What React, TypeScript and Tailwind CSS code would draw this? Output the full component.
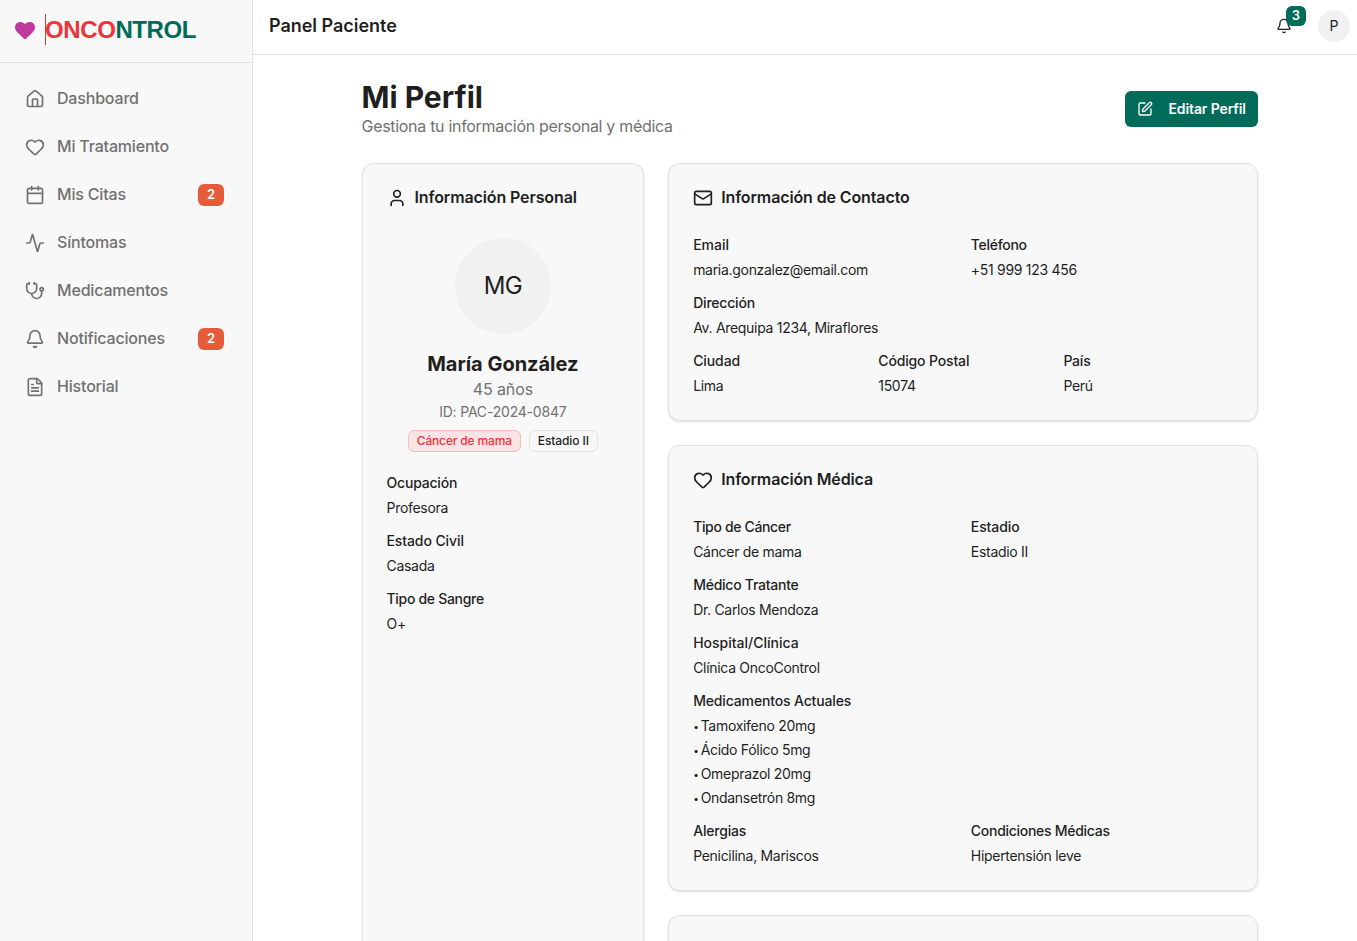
import type { ReactNode } from "react";
import {
  Activity,
  Bell,
  Calendar,
  FileText,
  Heart,
  House,
  Mail,
  SquarePen,
  Stethoscope,
  User,
  type LucideIcon,
} from "lucide-react";

type NavItem = { label: string; icon: LucideIcon; badge?: number };

const navItems: NavItem[] = [
  { label: "Dashboard", icon: House },
  { label: "Mi Tratamiento", icon: Heart },
  { label: "Mis Citas", icon: Calendar, badge: 2 },
  { label: "Síntomas", icon: Activity },
  { label: "Medicamentos", icon: Stethoscope },
  { label: "Notificaciones", icon: Bell, badge: 2 },
  { label: "Historial", icon: FileText },
];

function Sidebar() {
  return (
    <aside className="flex w-[253px] shrink-0 flex-col border-r border-[#e2e2e2] bg-[#f8f8f8]">
      <div className="flex h-[63px] shrink-0 items-center gap-2 border-b border-[#e2e2e2] pb-[3px] pl-[13px]">
        <Heart className="size-6 fill-[#c0399f] text-[#c0399f]" strokeWidth={0} />
        <div className="flex h-[31px] items-center border-l border-[#d93a3f] font-['Liberation_Sans',Arial,sans-serif] text-2xl font-bold tracking-[-0.4px]">
          <span className="-ml-px text-[#ef333b]">ONCO</span>
          <span className="text-[#006b58]">NTROL</span>
        </div>
      </div>
      <nav className="flex flex-col gap-2 pt-4 pr-4 pl-[13px]">
        {navItems.map(({ label, icon: Icon, badge }) => (
          <a key={label} className="flex h-10 items-center gap-3 px-3 text-[#717171]">
            <Icon className="size-5 shrink-0" strokeWidth={2} />
            <span className="flex-1 pb-0.5 text-base font-medium tracking-[-0.18px]">{label}</span>
            {badge && (
              <span className="flex h-[22px] w-[26px] items-center justify-center rounded-md bg-[#e65c3a] text-[13px] font-semibold text-white">
                {badge}
              </span>
            )}
          </a>
        ))}
      </nav>
    </aside>
  );
}

function TopBar() {
  return (
    <header className="flex h-[55px] shrink-0 items-center justify-between border-b border-[#e2e2e2] pr-[7px] pb-[2px] pl-4">
      <h2 className="text-lg font-semibold tracking-[-0.02px]">Panel Paciente</h2>
      <div className="flex items-center gap-[26px]">
        <div className="relative">
          <Bell className="size-4" strokeWidth={2} />
          <span className="absolute -top-3 left-2.5 flex size-5 items-center justify-center rounded-md bg-[#006b58] text-[13px] font-semibold text-white">
            3
          </span>
        </div>
        <div className="flex size-8 items-center justify-center rounded-full bg-[#f1f1f1] text-sm">P</div>
      </div>
    </header>
  );
}

function Card({ title, icon: Icon, children }: { title: string; icon: LucideIcon; children: ReactNode }) {
  return (
    <section className="rounded-xl border border-[#e2e2e2] bg-[#f8f8f8] p-6 shadow-sm">
      <h3 className="mb-[30px] flex h-5 items-center gap-2 text-base font-semibold tracking-[-0.12px]">
        <Icon className="size-5" strokeWidth={2} />
        <span className="pb-0.5">{title}</span>
      </h3>
      {children}
    </section>
  );
}

type FieldProps = { label: string; values: string[]; bulleted?: boolean; labelTracking?: string };

function Field({ label, values, bulleted, labelTracking = "tracking-[-0.2px]" }: FieldProps) {
  return (
    <div>
      <div className={`mb-2 text-sm leading-none font-medium ${labelTracking}`}>{label}</div>
      <div className="flex flex-col gap-1">
        {values.map((value) => (
          <p key={value} className="flex text-sm tracking-[-0.3px]">
            {bulleted && <span className="w-[7.5px] shrink-0 text-[10px] leading-5">•</span>}
            {value}
          </p>
        ))}
      </div>
    </div>
  );
}

function PersonalCard() {
  return (
    <Card title="Información Personal" icon={User}>
      <div className="mb-6 flex flex-col items-center">
        <div className="mb-4 flex size-24 items-center justify-center rounded-full bg-[#f1f1f1] text-2xl tracking-[-0.8px]">
          MG
        </div>
        <h4 className="text-xl font-bold tracking-[-0.02px]">María González</h4>
        <p className="-mt-px mb-px text-base tracking-[-0.1px] text-[#717171]">45 años</p>
        <p className="text-sm tracking-[-0.2px] text-[#717171]">ID: PAC-2024-0847</p>
        <div className="mt-2 flex gap-2">
          <span className="flex h-[22px] w-[113px] items-center justify-center rounded-md border border-[#f8bcbe] bg-[#f7e4e4] text-xs font-medium tracking-[-0.15px] text-[#ef333b]">
            Cáncer de mama
          </span>
          <span className="flex h-[22px] w-[69px] items-center justify-center rounded-md border border-[#e2e2e2] text-xs font-medium tracking-[-0.1px]">
            Estadio II
          </span>
        </div>
      </div>
      <div className="flex flex-col gap-4">
        <Field label="Ocupación" values={["Profesora"]} />
        <Field label="Estado Civil" values={["Casada"]} labelTracking="tracking-[-0.1px]" />
        <Field label="Tipo de Sangre" values={["O+"]} labelTracking="tracking-[-0.3px]" />
      </div>
    </Card>
  );
}

function ContactCard() {
  return (
    <Card title="Información de Contacto" icon={Mail}>
      <div className="flex flex-col gap-4">
        <div className="grid grid-cols-2 gap-4">
          <Field label="Email" values={["maria.gonzalez@email.com"]} labelTracking="tracking-normal" />
          <Field label="Teléfono" values={["+51 999 123 456"]} labelTracking="tracking-[-0.3px]" />
        </div>
        <Field label="Dirección" values={["Av. Arequipa 1234, Miraflores"]} />
        <div className="grid grid-cols-3 gap-4">
          <Field label="Ciudad" values={["Lima"]} labelTracking="tracking-[-0.1px]" />
          <Field label="Código Postal" values={["15074"]} labelTracking="tracking-[-0.15px]" />
          <Field label="País" values={["Perú"]} />
        </div>
      </div>
    </Card>
  );
}

function MedicalCard() {
  return (
    <Card title="Información Médica" icon={Heart}>
      <div className="flex flex-col gap-4">
        <div className="grid grid-cols-2 gap-4">
          <Field label="Tipo de Cáncer" values={["Cáncer de mama"]} labelTracking="tracking-[-0.35px]" />
          <Field label="Estadio" values={["Estadio II"]} labelTracking="tracking-[-0.1px]" />
        </div>
        <Field label="Médico Tratante" values={["Dr. Carlos Mendoza"]} labelTracking="tracking-[-0.25px]" />
        <Field label="Hospital/Clínica" values={["Clínica OncoControl"]} labelTracking="tracking-normal" />
        <Field
          label="Medicamentos Actuales"
          values={["Tamoxifeno 20mg", "Ácido Fólico 5mg", "Omeprazol 20mg", "Ondansetrón 8mg"]}
          bulleted
          labelTracking="tracking-[-0.15px]"
        />
        <div className="grid grid-cols-2 gap-4">
          <Field label="Alergias" values={["Penicilina, Mariscos"]} />
          <Field label="Condiciones Médicas" values={["Hipertensión leve"]} labelTracking="tracking-[-0.28px]" />
        </div>
      </div>
    </Card>
  );
}

export default function App() {
  return (
    <div className="flex h-screen overflow-hidden bg-white font-[Inter,sans-serif] text-[#1f1f1f]">
      <Sidebar />
      <div className="flex min-w-0 flex-1 flex-col">
        <TopBar />
        <main className="flex-1 overflow-hidden pt-6 pl-[9px]">
          <div className="mx-auto flex max-w-4xl flex-col gap-6">
            <div className="flex items-center justify-between">
              <div>
                <h1 className="text-3xl font-bold">Mi Perfil</h1>
                <p className="-mt-px mb-px text-base tracking-[-0.3px] text-[#717171]">
                  Gestiona tu información personal y médica
                </p>
              </div>
              <button className="flex h-9 w-[133px] items-center gap-4 rounded-md bg-[#006b58] px-3 text-sm font-semibold tracking-[-0.12px] whitespace-nowrap text-white">
                <SquarePen className="size-4 shrink-0" strokeWidth={2} />
                Editar Perfil
              </button>
            </div>
            <div className="grid grid-cols-3 gap-6">
              <PersonalCard />
              <div className="col-span-2 flex flex-col gap-6">
                <ContactCard />
                <MedicalCard />
                <section className="h-64 rounded-xl border border-[#e2e2e2] bg-[#f8f8f8] shadow-sm" />
              </div>
            </div>
          </div>
        </main>
      </div>
    </div>
  );
}
